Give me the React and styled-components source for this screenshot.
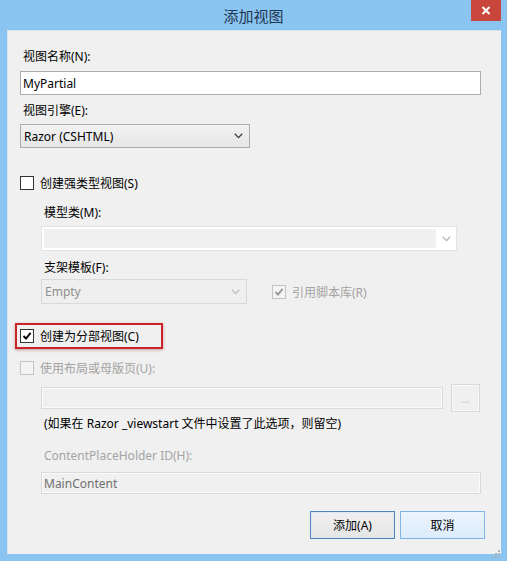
import React from "react";
import styled, { createGlobalStyle } from "styled-components";

const Global = createGlobalStyle`
  html, body { margin: 0; padding: 0; }
  body {
    width: 507px; height: 561px; overflow: hidden;
    font-family: "Noto Sans", "Noto Sans CJK SC", sans-serif;
    font-size: 12px;
    color: #000;
  }
`;

const Window = styled.div`
  width: 507px;
  height: 561px;
  box-sizing: border-box;
  background: #8ac4f1;
  display: flex;
  flex-direction: column;
  padding: 0 6px 7px 7px;
`;

const TitleBar = styled.div`
  height: 30px;
  flex: none;
  position: relative;
  display: flex;
  align-items: center;
  justify-content: center;
  margin: 0 -6px 0 -7px;
`;

const Title = styled.div`
  font-family: "Noto Sans CJK SC", sans-serif;
  font-size: 15px;
  color: #1d3550;
  margin-left: 0px;
  margin-top: 0px;
`;

const CloseButton = styled.div`
  position: absolute;
  right: 6px;
  top: 0;
  width: 30px;
  height: 21px;
  background: #c9463d;
  display: flex;
  align-items: center;
  justify-content: center;
`;

const Body = styled.div`
  flex: 1;
  background: #f0f0f0;
  box-sizing: border-box;
  border-top: 1px solid #d5e3ef;
  border-left: 1px solid #d5e3ef;
  padding: 18px 0 0 12px;
  display: flex;
  flex-direction: column;
  position: relative;
`;

const Label = styled.div`
  height: 16px;
  line-height: 16px;
  margin-top: ${(p) => p.$mt || 0}px;
  margin-left: ${(p) => (p.$indent ? 24 : 3)}px;
  color: ${(p) => (p.$disabled ? "#a3a3a3" : "#000")};
  white-space: nowrap;
`;

const TextBox = styled.div`
  box-sizing: border-box;
  width: ${(p) => p.$w}px;
  height: ${(p) => p.$h || 24}px;
  margin-top: ${(p) => p.$mt || 0}px;
  margin-left: ${(p) => (p.$indent ? 21 : 0)}px;
  border: 1px solid ${(p) => (p.$disabled ? "#dadada" : "#acacac")};
  background: ${(p) => (p.$disabled ? "#f0f0f0" : "#fff")};
  box-shadow: ${(p) => (p.$disabled ? "inset 0 0 0 1px #fafafa" : "none")};
  color: ${(p) => (p.$disabled ? "#6f6f6f" : "#000")};
  padding-left: 2px;
  display: flex;
  align-items: center;
  white-space: nowrap;
  flex: none;
`;

const Select = styled.div`
  box-sizing: border-box;
  width: ${(p) => p.$w}px;
  height: ${(p) => p.$h || 24}px;
  margin-top: ${(p) => p.$mt || 0}px;
  border: 1px solid ${(p) => (p.$disabled ? "#d9d9d9" : "#acacac")};
  background: ${(p) =>
    p.$disabled ? "#efefef" : "linear-gradient(#f2f2f2, #e6e6e6)"};
  color: ${(p) => (p.$disabled ? "#8e8e8e" : "#000")};
  display: flex;
  align-items: center;
  justify-content: space-between;
  padding: 0 6px 0 3px;
  flex: none;
`;

const ComboBox = styled.div`
  box-sizing: border-box;
  width: 416px;
  height: 25px;
  margin-top: ${(p) => p.$mt || 0}px;
  margin-left: 21px;
  border: 1px solid #e3e3e3;
  background: #fff;
  display: flex;
  align-items: stretch;
  padding: 2px 0 2px 2px;
  flex: none;
`;

const ComboField = styled.div`
  flex: 1;
  background: #f0f0f0;
`;

const ComboArrow = styled.div`
  width: 20px;
  display: flex;
  align-items: center;
  justify-content: center;
`;

const Row = styled.div`
  display: flex;
  align-items: center;
  margin-top: ${(p) => p.$mt || 0}px;
  margin-left: ${(p) => (p.$indent ? 21 : 0)}px;
  gap: ${(p) => p.$gap || 0}px;
`;

const CheckRow = styled.label`
  display: flex;
  align-items: center;
  height: 16px;
  margin-top: ${(p) => p.$mt || 0}px;
  gap: 6px;
  color: ${(p) => (p.$disabled ? "#a3a3a3" : "#000")};
  white-space: nowrap;
`;

const Highlight = styled.div`
  box-sizing: border-box;
  width: 148px;
  height: 26px;
  margin-top: ${(p) => p.$mt || 0}px;
  margin-left: -5px;
  border: 2px solid #c9232b;
  box-shadow: 0 1px 3px rgba(120, 0, 0, 0.35);
  display: flex;
  align-items: center;
  padding-left: 3px;
`;

const Box = styled.span`
  box-sizing: border-box;
  width: 14px;
  height: 14px;
  flex: none;
  border: 1px solid ${(p) => (p.$disabled ? "#c4c4c4" : "#333")};
  background: ${(p) => (p.$disabled ? "#f4f4f4" : "#fff")};
  display: flex;
  align-items: center;
  justify-content: center;
`;

const BrowseButton = styled.div`
  box-sizing: border-box;
  width: 29px;
  height: 28px;
  border: 1px solid #d8d8d8;
  background: #f0f0f0;
  box-shadow: inset 0 0 0 1px #f8f8f8;
  color: #bdbdbd;
  display: flex;
  align-items: center;
  justify-content: center;
  font-size: 11px;
  flex: none;
`;

const Hint = styled.div`
  height: 16px;
  line-height: 16px;
  margin-top: 4px;
  margin-left: 24px;
  white-space: nowrap;
`;

const ButtonBar = styled.div`
  display: flex;
  justify-content: flex-end;
  gap: 5px;
  margin-top: 17px;
  padding-right: 16px;
`;

const Button = styled.div`
  box-sizing: border-box;
  width: 85px;
  height: 28px;
  display: flex;
  align-items: center;
  justify-content: center;
  border: 1px solid ${(p) => (p.$hover ? "#7eb4ea" : "#4f86c0")};
  background: ${(p) =>
    p.$hover ? "linear-gradient(#ecf4fc, #dcecfc)" : "linear-gradient(#f0f0f0, #e5e5e5)"};
  box-shadow: ${(p) => (p.$hover ? "none" : "inset 0 0 0 1px #dde8f3")};
  color: #000;
`;

const Grip = styled.div`
  position: absolute;
  right: 1px;
  bottom: 1px;
  width: 8px;
  height: 8px;
`;

const Chevron = ({ color = "#3c3c3c" }) => (
  <svg width="9" height="6" viewBox="0 0 9 6">
    <path d="M0.8 0.8 L4.5 4.6 L8.2 0.8" fill="none" stroke={color} strokeWidth="1.3" />
  </svg>
);

const Check = ({ color = "#000" }) => (
  <svg width="10" height="10" viewBox="0 0 10 10">
    <path d="M1.5 5 L4 7.6 L8.6 1.8" fill="none" stroke={color} strokeWidth="1.9" />
  </svg>
);

export default function App() {
  return (
    <>
      <Global />
      <Window>
        <TitleBar>
          <Title>添加视图</Title>
          <CloseButton>
            <svg width="10" height="9" viewBox="0 0 10 9">
              <path d="M1.5 1 L8.5 8 M8.5 1 L1.5 8" stroke="#fff" strokeWidth="2" />
            </svg>
          </CloseButton>
        </TitleBar>
        <Body>
          <Label>视图名称(N):</Label>
          <TextBox $w={461} $mt={6}>MyPartial</TextBox>
          <Label $mt={8}>视图引擎(E):</Label>
          <Select $w={230} $mt={5}>
            <span>Razor (CSHTML)</span>
            <Chevron />
          </Select>

          <CheckRow $mt={27}>
            <Box />
            <span>创建强类型视图(S)</span>
          </CheckRow>

          <Label $indent $mt={14}>模型类(M):</Label>
          <ComboBox $mt={5}>
            <ComboField />
            <ComboArrow>
              <Chevron color="#b5b5b5" />
            </ComboArrow>
          </ComboBox>

          <Label $indent $mt={9}>支架模板(F):</Label>
          <Row $indent $mt={3} $gap={25}>
            <Select $w={206} $h={25} $disabled>
              <span>Empty</span>
              <Chevron color="#bdbdbd" />
            </Select>
            <CheckRow $disabled>
              <Box $disabled>
                <Check color="#9a9a9a" />
              </Box>
              <span>引用脚本库(R)</span>
            </CheckRow>
          </Row>

          <Highlight $mt={19}>
            <CheckRow>
              <Box>
                <Check />
              </Box>
              <span>创建为分部视图(C)</span>
            </CheckRow>
          </Highlight>

          <CheckRow $mt={11} $disabled>
            <Box $disabled />
            <span>使用布局或母版页(U):</span>
          </CheckRow>

          <Row $indent $mt={8} $gap={8}>
            <TextBox $w={402} $h={22} $disabled />
            <BrowseButton>...</BrowseButton>
          </Row>

          <Hint>(如果在 Razor _viewstart 文件中设置了此选项，则留空)</Hint>

          <Label $indent $disabled $mt={16}>ContentPlaceHolder ID(H):</Label>
          <TextBox $w={440} $h={22} $mt={8} $indent $disabled>
            MainContent
          </TextBox>

          <ButtonBar>
            <Button>添加(A)</Button>
            <Button $hover>取消</Button>
          </ButtonBar>

          <Grip>
            <svg width="8" height="8" viewBox="0 0 8 8">
              <g fill="#a8b4c0">
                <rect x="6" y="0" width="2" height="2" />
                <rect x="3" y="3" width="2" height="2" />
                <rect x="6" y="3" width="2" height="2" />
                <rect x="0" y="6" width="2" height="2" />
                <rect x="3" y="6" width="2" height="2" />
                <rect x="6" y="6" width="2" height="2" />
              </g>
            </svg>
          </Grip>
        </Body>
      </Window>
    </>
  );
}
